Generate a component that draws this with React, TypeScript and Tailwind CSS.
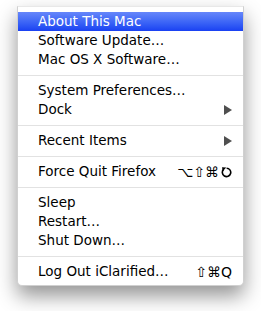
import React from 'react';

type Item =
  | { kind: 'sep' }
  | { kind: 'item'; label: string; active?: boolean; submenu?: boolean; shortcut?: React.ReactNode };

const EscGlyph = () => (
  <svg width="11" height="12" viewBox="0 0 11 12" className="ml-[1px]">
    <path d="M2.6 3.4 A4.2 4.2 0 1 0 5.6 2.2" fill="none" stroke="#000" strokeWidth="1.6" />
    <path d="M1 1.2 L5.2 1.6 L1.8 5.2 Z" fill="#000" />
  </svg>
);

const items: Item[] = [
  { kind: 'item', label: 'About This Mac', active: true },
  { kind: 'item', label: 'Software Update…' },
  { kind: 'item', label: 'Mac OS X Software…' },
  { kind: 'sep' },
  { kind: 'item', label: 'System Preferences…' },
  { kind: 'item', label: 'Dock', submenu: true },
  { kind: 'sep' },
  { kind: 'item', label: 'Recent Items', submenu: true },
  { kind: 'sep' },
  {
    kind: 'item',
    label: 'Force Quit Firefox',
    shortcut: (
      <span className="flex items-center text-[14px] gap-[1px]">
        ⌥⇧⌘<EscGlyph />
      </span>
    ),
  },
  { kind: 'sep' },
  { kind: 'item', label: 'Sleep' },
  { kind: 'item', label: 'Restart…' },
  { kind: 'item', label: 'Shut Down…' },
  { kind: 'sep' },
  { kind: 'item', label: 'Log Out iClarified…', shortcut: <span className="text-[14px]">⇧⌘Q</span> },
];

const App: React.FC = () => {
  return (
    <div className="w-[261px] h-[311px] bg-white pt-[6px] pl-[17px]" style={{ fontFamily: '"DejaVu Sans", sans-serif' }}>
      <div className="w-[227px] bg-white pt-[5px] pb-[4px] rounded-b-[5px] border border-[#d0d0d0] border-t-[#e8e8e8] shadow-[0_10px_20px_rgba(0,0,0,0.42)]">
        {items.map((it, i) =>
          it.kind === 'sep' ? (
            <div key={i} className="h-[12px] flex items-center">
              <div className="h-px w-full bg-[#e2e2e2]" />
            </div>
          ) : (
            <div
              key={i}
              className={`h-[19px] flex items-center justify-between pl-[20px] pr-[11px] text-[13.5px] leading-none ${
                it.active ? 'bg-gradient-to-b from-[#6686fa] to-[#1a40f2] text-white' : 'text-black'
              }`}
            >
              <span>{it.label}</span>
              {it.submenu && (
                <svg width="8" height="10" viewBox="0 0 8 10">
                  <path d="M0 0 L8 5 L0 10 Z" fill="#4f4f4f" />
                </svg>
              )}
              {it.shortcut}
            </div>
          )
        )}
      </div>
    </div>
  );
};

export default App;
